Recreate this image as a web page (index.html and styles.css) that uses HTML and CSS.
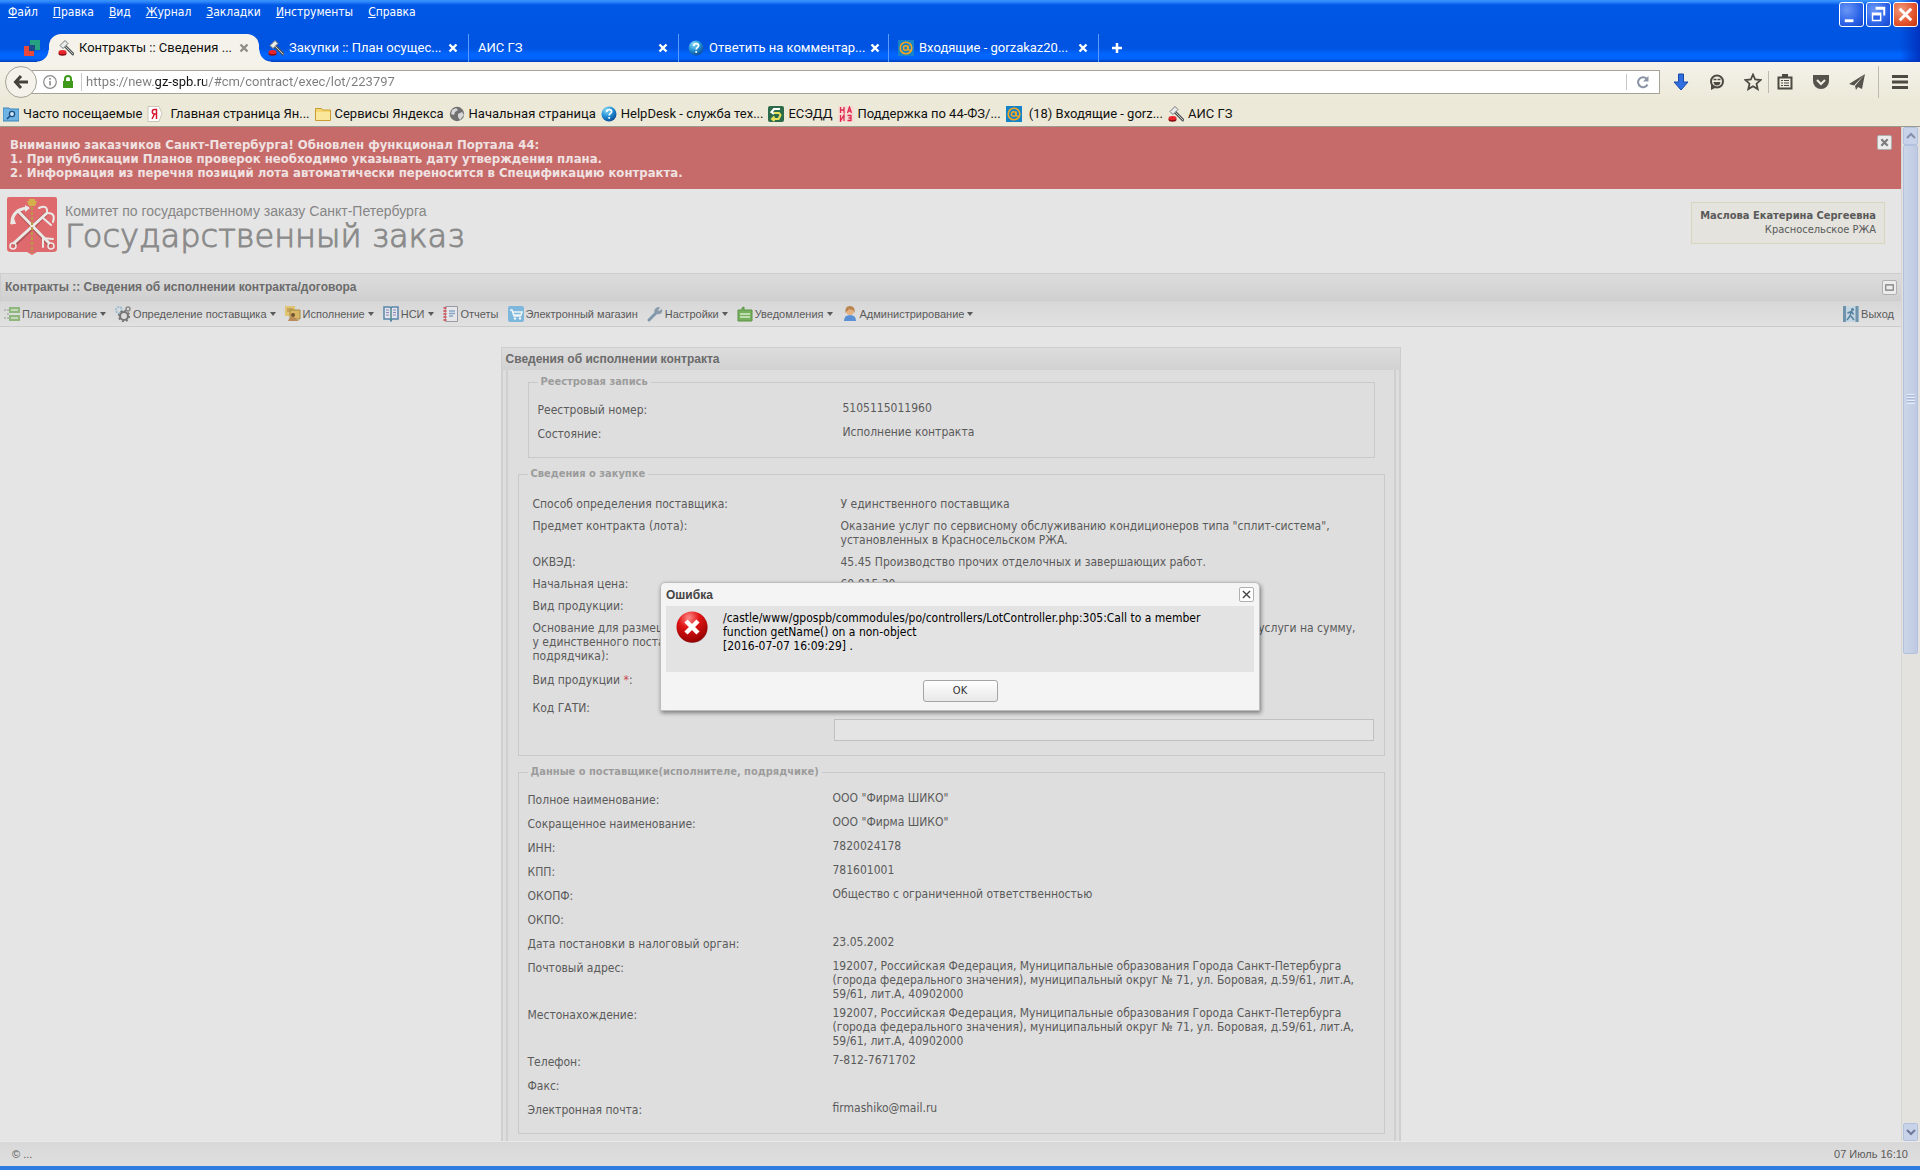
FILE: index.html
```
<!DOCTYPE html>
<html lang="ru">
<head>
  <meta charset="UTF-8">
  <title>Контракты :: Сведения об исполнении контракта/договора</title>
  <link rel="stylesheet" href="styles.css">
</head>
<body>

<svg class="sprite" width="0" height="0" aria-hidden="true">
  <defs>
    <radialGradient id="gOrb" cx="35%" cy="25%" r="80%">
      <stop offset="0" stop-color="#8fe0f8"/><stop offset=".5" stop-color="#2593d8"/><stop offset="1" stop-color="#0a4a93"/>
    </radialGradient>
    <radialGradient id="gError" cx="40%" cy="20%" r="85%">
      <stop offset="0" stop-color="#ff8a8a"/><stop offset=".4" stop-color="#e01414"/><stop offset="1" stop-color="#8e0000"/>
    </radialGradient>
  </defs>
  <symbol id="gavel" viewBox="0 0 16 16">
    <path d="M6 5l9 9" stroke="#555" stroke-width="3" stroke-linecap="round"/>
    <path d="M6 5l9 9" stroke="#b9c8c8" stroke-width="1" stroke-linecap="round"/>
    <path d="M2 5.500l5-5 3 3-5 5z" fill="#e8ecec" stroke="#777" stroke-width="1"/>
    <ellipse cx="4.500" cy="13.500" rx="4" ry="2.200" fill="#8a0d12"/>
    <ellipse cx="4.500" cy="12" rx="4" ry="2" fill="#e8252b"/>
  </symbol>
  <symbol id="orb" viewBox="0 0 16 16">
    <circle cx="8" cy="8" r="7.500" fill="url(#gOrb)"/>
    <path d="M5.800 6c0-3.200 4.800-2.900 4.800-.3 0 1.800-2.400 1.700-2.400 3.800M8.200 11v1.800" fill="none" stroke="#fff" stroke-width="1.700"/>
  </symbol>
  <symbol id="mail" viewBox="0 0 16 16">
    <path d="M0 0h16v16H0z" fill="#1583c8"/>
    <circle cx="8" cy="8" r="5.800" fill="none" stroke="#f5a623" stroke-width="1.600"/>
    <circle cx="7.700" cy="8" r="2.300" fill="none" stroke="#f5a623" stroke-width="1.500"/>
    <path d="M10.200 5.500v3.600q0 1.600 2.600 1" fill="none" stroke="#f5a623" stroke-width="1.300"/>
  </symbol>
  <symbol id="cross" viewBox="0 0 10 10">
    <path d="M1.500 1.500l7 7M8.500 1.500l-7 7" stroke="currentColor" stroke-width="2.400"/>
  </symbol>
  <symbol id="thinCross" viewBox="0 0 10 10">
    <path d="M1 1l8 8M9 1l-8 8" stroke="currentColor" stroke-width="1.500"/>
  </symbol>
</svg>

<header class="titlebar">
  <div class="menu-row">
    <nav class="menu">
      <button><u>Ф</u>айл</button>
      <button><u>П</u>равка</button>
      <button><u>В</u>ид</button>
      <button><u>Ж</u>урнал</button>
      <button><u>З</u>акладки</button>
      <button><u>И</u>нструменты</button>
      <button><u>С</u>правка</button>
    </nav>
    <div class="window-buttons">
      <button class="win-btn" aria-label="Свернуть"><svg viewBox="0 0 24 24"><path d="M5 17h9v3H5z" fill="#fff"/></svg></button>
      <button class="win-btn" aria-label="Восстановить"><svg viewBox="0 0 24 24"><path d="M9 4h10v9h-2V7H9zM5 10h10v9H5z" fill="#fff"/><path d="M6.500 13h7v4.500h-7z" fill="#2a63e8"/></svg></button>
      <button class="win-btn win-close" aria-label="Закрыть"><svg viewBox="0 0 24 24"><path d="M6 6l12 12M18 6L6 18" stroke="#fff" stroke-width="3"/></svg></button>
    </div>
  </div>
  <div class="tabs" role="tablist">
    <div class="pinned" role="tab" aria-label="Закрепленная вкладка">
      <svg class="icon" viewBox="0 0 16 16"><path d="M6 0h10v10h-5V5H6z" fill="#25a080"/><path d="M0 6h5v5h5v5H0z" fill="#e8483c"/><path d="M5 5h6v6H5z" fill="#1c4a8c"/></svg>
    </div>
    <div class="tab active" role="tab">
      <svg class="icon"><use href="#gavel"/></svg>
      <span>Контракты :: Сведения ...</span>
      <button aria-label="Закрыть вкладку"><svg><use href="#cross"/></svg></button>
    </div>
    <div class="tab" role="tab">
      <svg class="icon"><use href="#gavel"/></svg>
      <span>Закупки :: План осущес...</span>
      <button aria-label="Закрыть вкладку"><svg><use href="#cross"/></svg></button>
    </div>
    <div class="tab" role="tab">
      <span>АИС ГЗ</span>
      <button aria-label="Закрыть вкладку"><svg><use href="#cross"/></svg></button>
    </div>
    <div class="tab" role="tab">
      <svg class="icon"><use href="#orb"/></svg>
      <span>Ответить на комментар...</span>
      <button aria-label="Закрыть вкладку"><svg><use href="#cross"/></svg></button>
    </div>
    <div class="tab" role="tab">
      <svg class="icon"><use href="#mail"/></svg>
      <span>Входящие - gorzakaz20...</span>
      <button aria-label="Закрыть вкладку"><svg><use href="#cross"/></svg></button>
    </div>
    <button class="new-tab" aria-label="Новая вкладка"><svg viewBox="0 0 12 12"><path d="M6 1v10M1 6h10" stroke="#fff" stroke-width="2.500"/></svg></button>
  </div>
</header>

<div class="chrome">
  <div class="nav">
    <button class="back" aria-label="Назад"><svg viewBox="0 0 16 16"><path d="M8 2L2.500 8 8 14M3 8h12" fill="none" stroke="#44423c" stroke-width="3"/></svg></button>
    <div class="urlbar">
      <svg class="icon" viewBox="0 0 16 16"><circle cx="8" cy="8" r="6.300" fill="none" stroke="#8a8a8a" stroke-width="1.200"/><path d="M8 7v4.500M8 4v1.700" stroke="#8a8a8a" stroke-width="1.600"/></svg>
      <svg class="icon" viewBox="0 0 16 16"><path d="M5 7V5a3 3 0 0 1 6 0v2" fill="none" stroke="#3f9a1c" stroke-width="2"/><path d="M3 7h10v7H3z" fill="#3f9a1c"/></svg>
      <input class="url" type="text" aria-label="Адрес" value="https://new.gz-spb.ru/#cm/contract/exec/lot/223797">
      <button class="reload" aria-label="Обновить"><svg viewBox="0 0 14 14"><path d="M11.500 9.500A5 5 0 1 1 10.500 3.500" fill="none" stroke="#8b93a6" stroke-width="2"/><path d="M12.500 1v5.500H7z" fill="#8b93a6"/></svg></button>
    </div>
    <div class="nav-icons">
      <button aria-label="Загрузки"><svg viewBox="0 0 18 18"><path d="M6.500 1h5v8H16l-7 8-7-8h4.500z" fill="#2f6ee0" stroke="#1b49a8"/></svg></button>
      <button aria-label="Чат"><svg viewBox="0 0 18 18"><circle cx="9" cy="8.500" r="6" fill="none" stroke="#4b4a43" stroke-width="2"/><path d="M3 11v6l6-3z" fill="#4b4a43"/><path d="M5.500 6.500h3M9.500 6.500h3" stroke="#4b4a43" stroke-width="1.500"/><path d="M5.500 9h7q-.5 3.500-3.500 3.500T5.500 9z" fill="#4b4a43"/></svg></button>
      <button aria-label="Добавить в закладки"><svg viewBox="0 0 18 18"><path d="M9 1.500l2.200 5 5.300.6-4 3.600 1.200 5.400L9 13.300l-4.700 2.800 1.200-5.400-4-3.600 5.300-.6z" fill="none" stroke="#4b4a43" stroke-width="1.800"/></svg></button>
      <button class="after-line" aria-label="Список закладок"><svg viewBox="0 0 18 18"><path d="M2.500 4.500h13v11h-13z" fill="none" stroke="#4b4a43" stroke-width="2"/><path d="M6 1h6v4H6z" fill="#4b4a43"/><path d="M5 7.500h2M8 7.500h5M5 10h2M8 10h5M5 12.500h2M8 12.500h5" stroke="#4b4a43" stroke-width="1.200"/></svg></button>
      <button aria-label="Pocket"><svg viewBox="0 0 18 18"><path d="M1 2h16v6a8 8 0 0 1-16 0z" fill="#55534b"/><path d="M5 7l4 4 4-4" fill="none" stroke="#f1efe4" stroke-width="2"/></svg></button>
      <button aria-label="Отправить"><svg viewBox="0 0 18 18"><path d="M17 1L1 11l5 1.500zM17 1L7 13l1 4 2-3 4 2z" fill="#55534b"/></svg></button>
      <button class="after-line burger" aria-label="Меню"><svg viewBox="0 0 18 18"><path d="M1 3.500h16M1 9h16M1 14.500h16" stroke="#4b4a43" stroke-width="3"/></svg></button>
    </div>
  </div>
  <nav class="bookmarks">
    <a href="#"><svg class="icon" viewBox="0 0 16 16"><path d="M0 2h6l1 1h9v12H0z" fill="#6db3e3" stroke="#3c84bb"/><circle cx="9" cy="8" r="2.600" fill="#cfe9fa" stroke="#1e4f80" stroke-width="1.300"/><path d="M7 10l-3 3" stroke="#1e4f80" stroke-width="1.600"/></svg>Часто посещаемые</a>
    <a href="#" class="wide"><svg class="icon" viewBox="0 0 16 16"><path d="M1 .5h11l3 7-3 8H1z" fill="#fff" stroke="#c9c5b8"/><path d="M9.500 13V3.500H7.300q-2 0-2 2.300t2 2.300h2.200M7.500 8L5 13" fill="none" stroke="#d8152c" stroke-width="1.500"/></svg>Главная страница Ян...</a>
    <a href="#"><svg class="icon" viewBox="0 0 16 16"><path d="M.5 2.500h6l1 1.500h8v10.500H.5z" fill="#f6d66f" stroke="#c79d33"/><path d="M1 6h14v8H1z" fill="#fbe79b"/></svg>Сервисы Яндекса</a>
    <a href="#"><svg class="icon" viewBox="0 0 16 16"><circle cx="8" cy="8" r="7.200" fill="#717171"/><path d="M3 4l4-2 2 2-3 2-1 3-3-1zM9 8l4-2 2 3-4 5-2-3z" fill="#d8d8d8"/></svg>Начальная страница</a>
    <a href="#"><svg class="icon"><use href="#orb"/></svg>HelpDesk - служба тех...</a>
    <a href="#"><svg class="icon" viewBox="0 0 16 16"><rect width="16" height="16" rx="2" fill="#2c6b4a"/><path d="M12 3H6L3.500 6 6 8" fill="none" stroke="#fff" stroke-width="2.200"/><path d="M6 7h5l1.500 2-2 4H4M6.500 10.500L4 13l2.500 2" fill="none" stroke="#e8e25c" stroke-width="2"/></svg>ЕСЭДД</a>
    <a href="#"><svg class="icon" viewBox="0 0 16 16"><path d="M0 0h16v16H0z" fill="#f7dcd6"/><path d="M2.500 1v6M6 1v6M2.500 4H6M9.500 7L11.500 1l2 6M10 5h3M2.500 9v6L6 9v6M9.500 9.500h3.500v2.500h-2.500H13v2.500H9.500" fill="none" stroke="#e0284f" stroke-width="1.300"/></svg>Поддержка по 44-ФЗ/...</a>
    <a href="#" class="wide"><svg class="icon"><use href="#mail"/></svg>(18) Входящие - gorz...</a>
    <a href="#"><svg class="icon"><use href="#gavel"/></svg>АИС ГЗ</a>
  </nav>
</div>

<div class="page">
  <div class="viewport">
    <main class="content">
      <section class="notice">
        <p>Вниманию заказчиков Санкт-Петербурга! Обновлен функционал Портала 44:<br>
        1. При публикации Планов проверок необходимо указывать дату утверждения плана.<br>
        2. Информация из перечня позиций лота автоматически переносится в Спецификацию контракта.</p>
        <button class="tool" aria-label="Закрыть"><svg><use href="#cross"/></svg></button>
      </section>

      <div class="brand">
        <!-- герб Санкт-Петербурга -->
        <svg class="arms" viewBox="0 0 50 58">
          <path d="M2 0h46q2 0 2 2v50q0 3-4 3H30l-5 3-5-3H4q-4 0-4-3V2q0-2 2-2z" fill="#de6a6e"/>
          <g fill="none" stroke="#b25558" stroke-width="4.500" stroke-linecap="round">
            <path d="M8 47L39 17M42 47L12 15"/>
          </g>
          <g fill="none" stroke="#e9e9e6" stroke-width="3" stroke-linecap="round">
            <path d="M7 46L40 16M42 46L11 14"/>
            <path d="M5 26q0-13 15-15"/>
            <path d="M32 11q9-4 8 5M41 16q8 0 5 9M36 21l8 7" stroke-width="2"/>
            <circle cx="6" cy="49" r="3" stroke-width="1.500"/>
            <circle cx="44" cy="49" r="3" stroke-width="1.500"/>
            <path d="M36 50v-9l10 1" stroke-width="2"/>
          </g>
          <path d="M3 27l4-6 2 6zM18 8l5 3-5 4z" fill="#e9e9e6"/>
          <path d="M25 10v46" stroke="#b89a45" stroke-width="2" stroke-dasharray="3 2"/>
          <path d="M20 4h10l-2 5h-6zM22 2h6v2h-6z" fill="#d3b04c"/>
        </svg>
        <div class="brand-text">
          <div class="brand-sub">Комитет по государственному заказу Санкт-Петербурга</div>
          <div class="brand-name">Государственный заказ</div>
        </div>
        <div class="user">
          <b>Маслова Екатерина Сергеевна</b>
          <span>Красносельское РЖА</span>
        </div>
      </div>

      <div class="page-title">
        <h1>Контракты :: Сведения об исполнении контракта/договора</h1>
        <button class="tool" aria-label="Развернуть"><svg viewBox="0 0 12 10"><path d="M1 1.500h10v7H1z" fill="none" stroke="#777" stroke-width="1.500"/></svg></button>
      </div>

      <nav class="toolbar">
        <button class="drop"><svg class="icon" viewBox="0 0 16 16"><path d="M0 4h2M3 4h2M0 12h2M3 8h2M3 12h2" stroke="#8c9c8c"/><path d="M5 1h11v6H5zM5 9h11v6H5z" fill="#8fb77d"/><path d="M7 4h7M7 12h7" stroke="#d4e4cc" stroke-width="1.500"/></svg>Планирование</button>
        <button class="drop"><svg class="icon" viewBox="0 0 16 16"><circle cx="4" cy="4" r="3" fill="none" stroke="#9bbdd4" stroke-width="2" stroke-dasharray="2 1"/><circle cx="13" cy="3" r="2" fill="none" stroke="#8a8a8a" stroke-width="1.500"/><circle cx="9" cy="10" r="4" fill="none" stroke="#777" stroke-width="2.200"/><circle cx="9" cy="10" r="5.400" fill="none" stroke="#777" stroke-width="1.500" stroke-dasharray="2 2.200"/></svg>Определение поставщика</button>
        <button class="drop"><svg class="icon" viewBox="0 0 16 16"><path d="M0 0h10v10H0z" fill="#e0c373"/><path d="M5 4h10v9H5z" fill="#d8b764" stroke="#a88a45"/><path d="M2 3h6M2 5h3" stroke="#a88a45"/><circle cx="8" cy="9" r="2" fill="#6f5230"/><path d="M3 15q2-5 6-4l5 4z" fill="#b88d5a"/></svg>Исполнение</button>
        <button class="drop"><svg class="icon" viewBox="0 0 16 16"><path d="M1 1h6l1 1 1-1h6v12H9l-1 2-1-2H1z" fill="#e1e4ea" stroke="#5b86aa" stroke-width="1.500"/><path d="M8 2v12" stroke="#4f8b8b" stroke-width="1.500"/><path d="M3 4h3M3 6.500h3M3 9h3M10 4h3M10 6.500h3M10 9h3" stroke="#8d86bb"/></svg>НСИ</button>
        <button><svg class="icon" viewBox="0 0 16 16"><path d="M2.500.5h12v15h-12z" fill="#e6e6e8" stroke="#9a9aa6"/><path d="M2 1v14" stroke="#cf6065" stroke-width="3" stroke-dasharray="2 1"/><path d="M6 5h6M6 7.500h6M6 10h4" stroke="#87a6c6" stroke-width="1.400"/></svg>Отчеты</button>
        <button><svg class="icon" viewBox="0 0 16 16"><rect width="16" height="16" rx="2" fill="#7db8dc"/><path d="M2 4h2l2 6h7M5 6h9l-1 3H6" fill="none" stroke="#eef4f8" stroke-width="1.600"/><circle cx="7" cy="12.500" r="1.200" fill="#eef4f8"/><circle cx="12" cy="12.500" r="1.200" fill="#eef4f8"/></svg>Электронный магазин</button>
        <button class="drop"><svg class="icon" viewBox="0 0 16 16"><path d="M2 14l8-8" stroke="#8098ae" stroke-width="3" stroke-linecap="round"/><path d="M9 2q3-2 4 0l-2 2 1 1 3-2q1 4-2 5-3 1-5-1t1-5z" fill="#8a9bab"/></svg>Настройки</button>
        <button class="drop"><svg class="icon" viewBox="0 0 16 16"><path d="M1 4h4V2l2-1v3h8v11H1z" fill="#76b05c" stroke="#5c9346"/><path d="M3 8h10M3 11h10" stroke="#d6ebcb" stroke-width="1.500"/></svg>Уведомления</button>
        <button class="drop"><svg class="icon" viewBox="0 0 16 16"><path d="M2 15q0-6 6-6t6 6z" fill="#5b8fd6"/><circle cx="8" cy="5" r="4" fill="#e4b184"/><path d="M3.500 7q-1-7 4.500-7t4.500 7l-1.500-3q-3 0-4-1-1 2-2 2z" fill="#b9854f"/></svg>Администрирование</button>
        <button class="exit"><svg class="icon" viewBox="0 0 16 16"><path d="M0 0h16v16H0z" fill="#c3d6e2"/><path d="M1.500 0v16M14 0v16" stroke="#6f93ad" stroke-width="3"/><circle cx="9.500" cy="3.500" r="1.500" fill="#55809d"/><path d="M4.500 7l4-1.500 2 3M8 6l-1 4-3 4M8 10l3 4" fill="none" stroke="#55809d" stroke-width="1.500"/></svg>Выход</button>
      </nav>

      <section class="panel">
        <h2>Сведения об исполнении контракта</h2>
        <div class="panel-body">
          <fieldset class="nested">
            <legend>Реестровая запись</legend>
            <dl class="fields">
              <div><dt>Реестровый номер:</dt><dd>5105115011960</dd></div>
              <div><dt>Состояние:</dt><dd>Исполнение контракта</dd></div>
            </dl>
          </fieldset>

          <fieldset>
            <legend>Сведения о закупке</legend>
            <dl class="fields purchase">
              <div><dt>Способ определения поставщика:</dt><dd>У единственного поставщика</dd></div>
              <div><dt>Предмет контракта (лота):</dt><dd>Оказание услуг по сервисному обслуживанию кондиционеров типа "сплит-система", установленных в Красносельском РЖА.</dd></div>
              <div><dt>ОКВЭД:</dt><dd>45.45 Производство прочих отделочных и завершающих работ.</dd></div>
              <div><dt>Начальная цена:</dt><dd>60 015.30</dd></div>
              <div><dt>Вид продукции:</dt><dd></dd></div>
              <div><dt>Основание для размещения<br>у единственного поставщика<br>подрядчика):</dt><dd class="basis">услуги на сумму,</dd></div>
            </dl>
            <div class="inputs">
              <div>Вид продукции <span class="required">*</span>:</div>
              <label for="gati">Код ГАТИ:</label>
              <input id="gati" type="text">
            </div>
          </fieldset>

          <fieldset>
            <legend>Данные о поставщике(исполнителе, подрядчике)</legend>
            <dl class="fields">
              <div><dt>Полное наименование:</dt><dd>ООО "Фирма ШИКО"</dd></div>
              <div><dt>Сокращенное наименование:</dt><dd>ООО "Фирма ШИКО"</dd></div>
              <div><dt>ИНН:</dt><dd>7820024178</dd></div>
              <div><dt>КПП:</dt><dd>781601001</dd></div>
              <div><dt>ОКОПФ:</dt><dd>Общество с ограниченной ответственностью</dd></div>
              <div><dt>ОКПО:</dt><dd></dd></div>
              <div><dt>Дата постановки в налоговый орган:</dt><dd>23.05.2002</dd></div>
              <div><dt>Почтовый адрес:</dt><dd>192007, Российская Федерация, Муниципальные образования Города Санкт-Петербурга (города федерального значения), муниципальный округ № 71, ул. Боровая, д.59/61, лит.А, 59/61, лит.А, 40902000</dd></div>
              <div><dt>Местонахождение:</dt><dd>192007, Российская Федерация, Муниципальные образования Города Санкт-Петербурга (города федерального значения), муниципальный округ № 71, ул. Боровая, д.59/61, лит.А, 59/61, лит.А, 40902000</dd></div>
              <div><dt>Телефон:</dt><dd>7-812-7671702</dd></div>
              <div><dt>Факс:</dt><dd></dd></div>
              <div><dt>Электронная почта:</dt><dd>firmashiko@mail.ru</dd></div>
            </dl>
          </fieldset>
        </div>
      </section>
    </main>

    <div class="scrollbar">
      <button class="scroll-btn" aria-label="Вверх"><svg viewBox="0 0 10 8"><path d="M1 6l4-4 4 4" fill="none" stroke="#8592ae" stroke-width="2.200"/></svg></button>
      <div class="track"><div class="thumb"></div></div>
      <button class="scroll-btn" aria-label="Вниз"><svg viewBox="0 0 10 8"><path d="M1 2l4 4 4-4" fill="none" stroke="#6f7d9c" stroke-width="2.200"/></svg></button>
    </div>
  </div>

  <footer class="status">
    <span>© ...</span>
    <span>07 Июль 16:10</span>
  </footer>

  <div class="overlay">
    <div class="dialog" role="alertdialog" aria-labelledby="dialogTitle">
      <div class="dialog-head">
        <h3 id="dialogTitle">Ошибка</h3>
        <button class="tool" aria-label="Закрыть"><svg><use href="#thinCross"/></svg></button>
      </div>
      <div class="dialog-body">
        <svg class="error-icon" viewBox="0 0 32 32"><circle cx="16.500" cy="17" r="15" fill="#5b1a1a" opacity=".5"/><circle cx="16" cy="16" r="15.500" fill="url(#gError)"/><path d="M10 10l12 12M22 10L10 22" stroke="#fff" stroke-width="4.500"/></svg>
        <p>/castle/www/gpospb/commodules/po/controllers/LotController.php:305:Call to a member function getName() on a non-object<br>[2016-07-07 16:09:29] .</p>
      </div>
      <div class="dialog-foot"><button class="ok">OK</button></div>
    </div>
  </div>
</div>

</body>
</html>
```
FILE: styles.css
```
* {
  box-sizing: border-box;
}
body {
  margin: 0;
  height: 100vh;
  display: flex;
  flex-direction: column;
  overflow: hidden;
  font: 12px/14px "DejaVu Sans Condensed", "DejaVu Sans", sans-serif;
  color: #5a5a5a;
  background: #e5e5e5;
}
button {
  font: inherit;
  color: inherit;
  background: none;
  border: none;
  padding: 0;
  cursor: pointer;
}
a {
  color: inherit;
  text-decoration: none;
}
h1, h2, h3, p, dl, dd {
  margin: 0;
}
svg {
  display: block;
  flex: none;
}
.sprite {
  position: absolute;
}
.icon {
  width: 16px;
  height: 16px;
}

/* заголовок окна */
.titlebar {
  flex: none;
  height: 62px;
  display: flex;
  flex-direction: column;
  justify-content: space-between;
  font: 13px/16px Roboto, sans-serif;
  color: #fff;
  background:
    linear-gradient(to left, #0033c0, rgba(0, 51, 192, 0) 20px),
    linear-gradient(#3c96ff 0, #2a84fa 2px, #0058e6 5px, #0053e0 48px, #0066ff 54px, #0062fa 59px, #003cb8 62px);
}
.menu-row {
  display: flex;
  justify-content: space-between;
  padding: 2px 2px 0 8px;
}
.menu {
  display: flex;
  gap: 15px;
  height: 20px;
  font: 12px/16px "DejaVu Sans Condensed", sans-serif;
}
.window-buttons {
  display: flex;
  gap: 2px;
}
.win-btn {
  width: 25px;
  height: 25px;
  border: 1px solid #fff;
  border-radius: 3px;
  background: radial-gradient(circle at 30% 30%, #6a96f5, #2a63e8 60%, #1446c8);
}
.win-close {
  background: radial-gradient(circle at 30% 30%, #f09a7c, #e2532c 60%, #c3370f);
}
.tabs {
  display: flex;
  align-items: stretch;
  height: 28px;
}
.pinned {
  display: flex;
  align-items: center;
  width: 49px;
  padding-left: 24px;
}
.tab {
  display: flex;
  align-items: center;
  gap: 5px;
  width: 210px;
  padding: 0 10px 0 9px;
  border-right: 1px solid #5b9bff;
}
.tab span {
  flex: 1;
  white-space: nowrap;
}
.tab button svg {
  width: 10px;
  height: 10px;
}
.active {
  position: relative;
  color: #111;
  background: #f4f2ea;
  border-right: none;
  border-radius: 12px 12px 0 0;
}
.active button {
  color: #8f8d86;
}
/* вогнутые края активной вкладки */
.active::before, .active::after {
  content: '';
  position: absolute;
  bottom: 0;
  width: 12px;
  height: 12px;
}
.active::before {
  right: 100%;
  background: radial-gradient(circle at 0 0, transparent 11px, #f4f2ea 12px);
}
.active::after {
  left: 100%;
  background: radial-gradient(circle at 100% 0, transparent 11px, #f4f2ea 12px);
}
.new-tab {
  padding: 0 12px;
}
.new-tab svg {
  width: 12px;
  height: 12px;
}

/* панель навигации */
.chrome {
  flex: none;
  font: 13px/16px Roboto, sans-serif;
  color: #111;
  background: linear-gradient(#f4f2ea, #ece9d8 40px);
  border-bottom: 1px solid #9c9a90;
}
.nav {
  display: flex;
  align-items: center;
  height: 40px;
  padding: 0 11px 0 5px;
}
.back {
  position: relative;
  display: grid;
  place-items: center;
  width: 32px;
  height: 32px;
  border: 1px solid #a5a397;
  border-radius: 50%;
  background: #f4f2ea;
}
.back svg {
  width: 16px;
  height: 16px;
}
.urlbar {
  flex: 1;
  display: flex;
  align-items: center;
  gap: 2px;
  height: 24px;
  margin-left: -6px;
  padding-left: 10px;
  border: 1px solid #a5a397;
  background: #fff;
}
.url {
  flex: 1;
  margin-left: 3px;
  padding: 0 0 0 4px;
  border: none;
  border-left: 1px solid #c8c8c8;
  outline: none;
  font: inherit;
  line-height: 18px;
  color: transparent;
  /* домен темнее остального адреса */
  background: linear-gradient(to right, #7c7c7c 72px, #111 72px, #111 124px, #7c7c7c 124px);
  background-clip: text;
  -webkit-background-clip: text;
}
.reload {
  display: grid;
  place-items: center;
  width: 33px;
  height: 16px;
  border-left: 1px solid #c8c8c8;
}
.reload svg {
  width: 14px;
  height: 14px;
}
.nav-icons {
  display: flex;
  align-items: center;
  gap: 18px;
  margin-left: 12px;
}
.nav-icons svg {
  width: 18px;
  height: 18px;
}
.after-line {
  height: 22px;
  margin-left: -12px;
  padding-left: 7px;
  border-left: 1px solid #bdbbae;
}
.burger {
  height: 32px;
  margin-left: -6px;
  padding-left: 12px;
}
.bookmarks {
  display: flex;
  align-items: center;
  gap: 5px;
  height: 24px;
  padding: 0 3px;
  white-space: nowrap;
}
.bookmarks a {
  display: flex;
  align-items: center;
  gap: 4px;
}
.bookmarks .wide {
  gap: 7px;
}

/* страница */
.page {
  flex: 1;
  min-height: 0;
  display: flex;
  flex-direction: column;
  position: relative;
  border-bottom: 4px solid #2f7de0;
}
.viewport {
  flex: 1;
  min-height: 0;
  display: flex;
}
.content {
  flex: 1;
  display: flex;
  flex-direction: column;
  overflow: hidden;
}
.notice {
  flex: none;
  display: flex;
  justify-content: space-between;
  padding: 11px 9px 9px 10px;
  font-size: 13px;
  font-weight: bold;
  color: #f0e2e2;
  background: #c66b69;
}
.tool {
  display: grid;
  place-items: center;
  width: 15px;
  height: 15px;
  border: 1px solid #b0b0b0;
  border-radius: 2px;
  background: #ececec;
  color: #7c7c7c;
}
.tool svg {
  width: 9px;
  height: 9px;
}
.notice .tool {
  margin-top: -3px;
}
.brand {
  flex: none;
  display: flex;
  align-items: flex-start;
  height: 84px;
  padding: 8px 16px 0 7px;
}
.arms {
  width: 50px;
  height: 58px;
}
.brand-text {
  flex: 1;
  margin-left: 8px;
  color: #858585;
}
.brand-sub {
  margin-top: 4px;
  font: 14px/20px "Liberation Sans", sans-serif;
}
.brand-name {
  font: 200 32px/30px "DejaVu Sans", sans-serif;
  -webkit-text-stroke: 1px #8c8c8c;
}
.user {
  display: flex;
  flex-direction: column;
  margin-top: 5px;
  padding: 6px 8px;
  border: 1px solid #d9d6c0;
  background: #e4e3dd;
  font-size: 11px;
  text-align: right;
}
.page-title {
  flex: none;
  display: flex;
  align-items: center;
  justify-content: space-between;
  height: 28px;
  padding: 0 4px;
  border: 1px solid #cdcdcd;
  border-right: none;
  background: linear-gradient(#dcdcdc, #d0d0d0);
}
h1, h2, h3 {
  font: bold 12px/14px "Liberation Sans", sans-serif;
  color: #6b6b6b;
}
.toolbar {
  flex: none;
  display: flex;
  align-items: center;
  gap: 9px;
  height: 26px;
  padding: 0 7px 0 4px;
  border-bottom: 1px solid #cbcbcb;
  background: linear-gradient(#d7d7d7, #e1e1e1);
  font: 11px/14px "Liberation Sans", sans-serif;
  white-space: nowrap;
}
.toolbar button {
  display: flex;
  align-items: center;
  gap: 2px;
}
.drop::after {
  content: '';
  margin-left: 1px;
  border: 3px solid transparent;
  border-top: 4px solid #5a5a5a;
  border-bottom: none;
}
.toolbar .exit {
  margin-left: auto;
}

/* форма */
.panel {
  flex: 1;
  width: 900px;
  max-width: 100%;
  margin: 20px auto 0;
  background: #dedede;
}
.panel h2 {
  padding: 4px;
  border: 1px solid #cecece;
  border-bottom: none;
  background: linear-gradient(#dddddd, #d2d2d2);
}
.panel-body {
  height: 100%;
  padding: 5px 8px 0 9px;
  border: 7px double #cfcfcf;
  border-top: none;
  border-bottom: none;
}
fieldset {
  margin: 0 1px 9px;
  padding: 12px 10px 8px 9px;
  border: 1px solid #c9c9c9;
}
.nested {
  margin: 0 11px 9px;
}
legend {
  padding: 0 3px;
  font-weight: bold;
  font-size: 11px;
  line-height: 14px;
  color: #9c9c9c;
}
.fields > div {
  display: grid;
  grid-template-columns: 305px 1fr;
  min-height: 19px;
  margin-bottom: 5px;
}
.fields dt {
  padding-top: 2px;
}
.purchase {
  padding: 4px 0 0 5px;
}
.purchase > div {
  grid-template-columns: 308px 1fr;
  min-height: 14px;
  margin-bottom: 8px;
}
.purchase dt {
  padding-top: 0;
}
.basis {
  padding-right: 18px;
  text-align: right;
}
.inputs {
  display: grid;
  gap: 14px;
  padding: 2px 0 6px 5px;
}
.inputs input {
  height: 22px;
  margin: -10px 0 0 301px;
  border: 1px solid #c0c0c0;
  background: #e4e4e4;
}
.required {
  color: #c8484e;
}

/* полоса прокрутки */
.scrollbar {
  width: 19px;
  display: flex;
  flex-direction: column;
  padding: 0 2px 0 1px;
  border-left: 1px solid #d6d6d6;
  background: #e3e2de;
}
.scroll-btn {
  display: grid;
  place-items: center;
  height: 18px;
  border: 1px solid #b4c1de;
  border-radius: 2px;
  background: #c8d3ea;
}
.scroll-btn svg {
  width: 10px;
  height: 8px;
}
.track {
  flex: 1;
}
.thumb {
  height: 52%;
  border: 1px solid #b4c1de;
  border-radius: 2px;
  background: repeating-linear-gradient(#e6edf9 0 1px, #a9b9da 1px 2px, #c6d0e6 2px 3px) center / 8px 10px no-repeat, linear-gradient(to right, #ccd5e8, #bfcae3);
}

.status {
  flex: none;
  display: flex;
  justify-content: space-between;
  align-items: center;
  height: 25px;
  padding: 0 12px;
  border-top: 1px solid #e9e9e9;
  background: linear-gradient(#d8d8d8, #dfdfdf);
  font: 11px/14px "Liberation Sans", sans-serif;
}

/* окно ошибки */
.overlay {
  position: absolute;
  inset: 0;
  display: flex;
  align-items: center;
  justify-content: center;
}
.dialog {
  width: 600px;
  padding: 0 5px 8px;
  border: 1px solid #bdbdbd;
  border-radius: 5px 5px 0 0;
  background: #f4f4f4;
  box-shadow: 1px 2px 4px rgba(0, 0, 0, 0.45);
}
.dialog-head {
  display: flex;
  align-items: center;
  justify-content: space-between;
  height: 23px;
}
.dialog h3 {
  color: #444;
}
.dialog .tool {
  background: #fff;
  color: #444;
}
.dialog-body {
  display: flex;
  gap: 15px;
  height: 66px;
  padding: 5px 10px;
  color: #000;
  background: #e3e3e3;
}
.error-icon {
  width: 32px;
  height: 32px;
}
.dialog-foot {
  padding-top: 8px;
  text-align: center;
}
.ok {
  width: 75px;
  height: 22px;
  border: 1px solid #a5a5a5;
  border-radius: 3px;
  background: linear-gradient(#fff, #e8e8e8);
  font-size: 11px;
  color: #333;
}
```
